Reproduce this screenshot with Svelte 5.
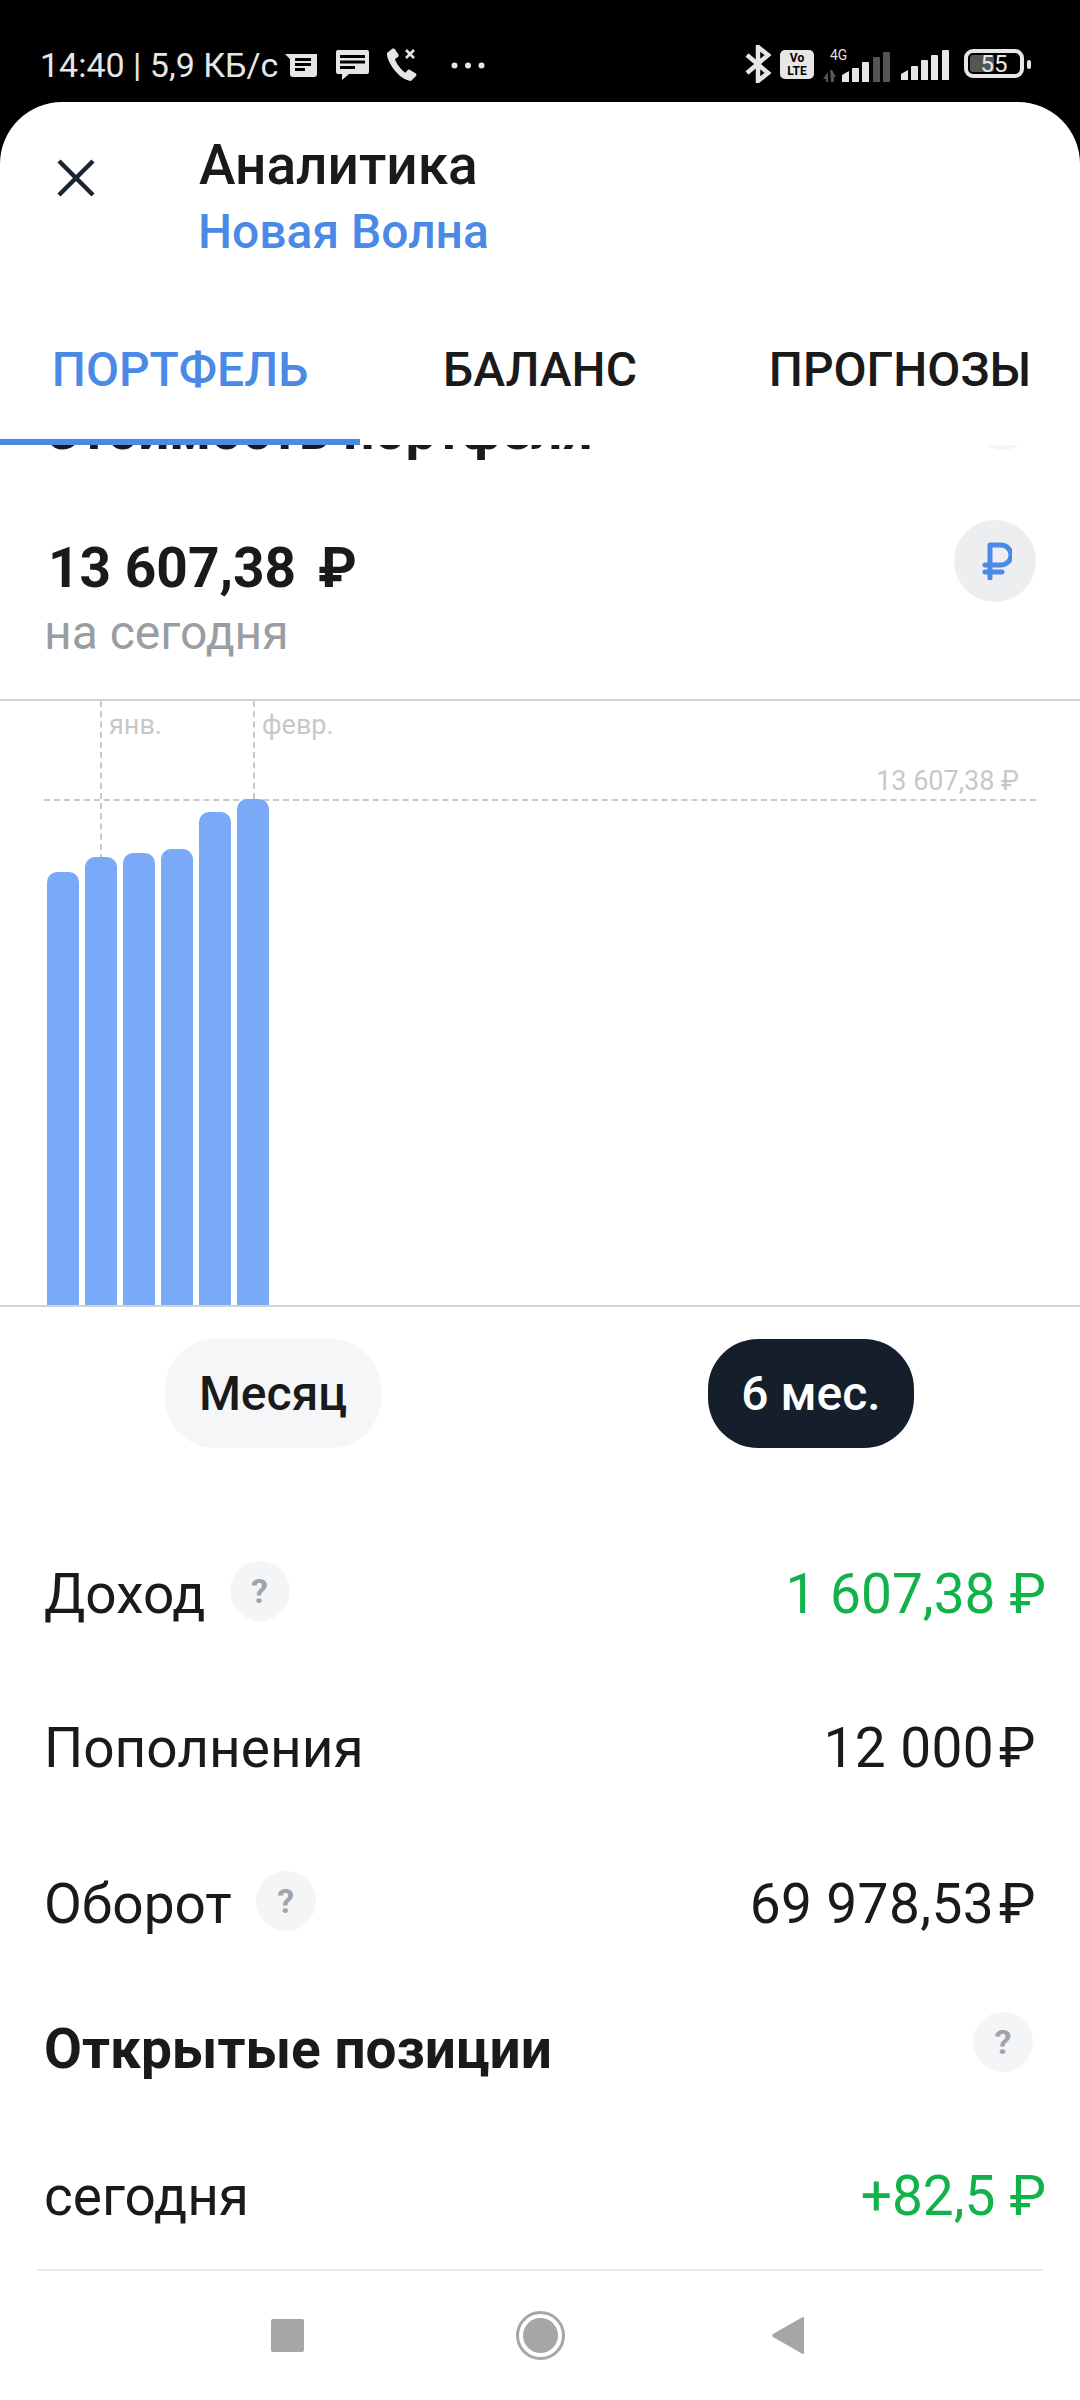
<script>
  const bars = [872, 857, 853, 849, 812, 799].map((top) => 1305 - top);
  const rows = [
    { label: 'Доход', value: '1 607,38', sign: '₽', green: true, hint: true, gap: 114 },
    { label: 'Пополнения', value: '12 000', sign: '₽', gap: 90 },
    { label: 'Оборот', value: '69 978,53', sign: '₽', hint: true, gap: 92 }
  ];
</script>

<div class="page">
  <div class="status">
    <div class="status-left">
      <span class="clock">14:40 | 5,9 КБ/с</span>
      <svg class="ic-news" viewBox="0 0 32 25" width="32" height="25">
        <path fill="#e6e6e6" d="M0 1h32v20a3 3 0 0 1-3 3H8a3 3 0 0 1-3-3V6z" />
        <path fill="#000" d="M10 5h16v3H10zM10 10h16v3H10zM10 15h10v3H10z" />
      </svg>
      <svg class="ic-msg" viewBox="0 0 33 30" width="33" height="30">
        <path fill="#e6e6e6" d="M2 0h29a2 2 0 0 1 2 2v20a2 2 0 0 1-2 2H13l-7 6v-6H2a2 2 0 0 1-2-2V2a2 2 0 0 1 2-2z" />
        <path fill="#000" d="M4 5h25v3H4zM4 10.500h25v3H4zM4 16h15v3H4z" />
      </svg>
      <svg class="ic-call" viewBox="0 0 32 33" width="32" height="33">
        <path fill="#e6e6e6" d="M6 1 1 5c-1 8 12 27 24 28l5-5c.8-1 .6-2-.2-2.600l-6-3.600c-.9-.4-1.700-.2-2.300.5l-2 2.400C15 22 10 15 9 11l3-2c.7-.6.8-1.400.5-2.200L9 1.300C8.300.4 7 .3 6 1z" />
        <path stroke="#e6e6e6" stroke-width="2.500" d="M20 2l8 8M28 2l-8 8" />
      </svg>
      <svg class="ic-dots" viewBox="0 0 34 7" width="34" height="7">
        <circle cx="3.500" cy="3.500" r="3" fill="#e6e6e6" />
        <circle cx="17" cy="3.500" r="3" fill="#e6e6e6" />
        <circle cx="30.500" cy="3.500" r="3" fill="#e6e6e6" />
      </svg>
    </div>
    <div class="status-right">
      <svg viewBox="0 0 26 38" width="26" height="38">
        <path fill="none" stroke="#e6e6e6" stroke-width="4.500" d="M2 10l21 18-10 8V2l10 8L2 28" />
      </svg>
      <div class="volte">Vo<br />LTE</div>
      <div class="net">
        <span class="four-g">4G</span>
        <svg viewBox="0 0 68 32" width="68" height="32">
          <path fill="#555" d="M0 29l5-7v10H3v-3zM7 20h2l4 7h-2v5H8z" />
          <path fill="#e6e6e6" d="M19 25l7-4v11h-7zM29 19a1 1 0 0 1 1-1h5a1 1 0 0 1 1 1v13h-7zM39 13a1 1 0 0 1 1-1h5a1 1 0 0 1 1 1v19h-7z" />
          <path fill="#555" d="M50 8a1 1 0 0 1 1-1h5a1 1 0 0 1 1 1v24h-7zM60 3a1 1 0 0 1 1-1h5a1 1 0 0 1 1 1v29h-7z" />
        </svg>
      </div>
      <svg class="sig2" viewBox="0 0 48 30" width="48" height="30">
        <path fill="#e6e6e6" d="M0 24l7-4v10H0zM10 17a1 1 0 0 1 1-1h5a1 1 0 0 1 1 1v13h-7zM20 11a1 1 0 0 1 1-1h5a1 1 0 0 1 1 1v19h-7zM30 6a1 1 0 0 1 1-1h5a1 1 0 0 1 1 1v24h-7zM41 1a1 1 0 0 1 1-1h5a1 1 0 0 1 1 1v29h-7z" />
      </svg>
      <div class="battery">
        <div class="battery-fill"></div>
        <span>55</span>
      </div>
      <div class="nub"></div>
    </div>
  </div>

  <div class="sheet">
    <header>
      <svg class="close" viewBox="0 0 38 38" width="38" height="38">
        <path stroke="#1b2430" stroke-width="4.500" d="M2 2l34 34M36 2L2 36" />
      </svg>
      <div class="titles">
        <div class="title">Аналитика</div>
        <div class="subtitle">Новая Волна</div>
      </div>
    </header>

    <nav class="tabs">
      <div class="tab active">ПОРТФЕЛЬ</div>
      <div class="tab">БАЛАНС</div>
      <div class="tab">ПРОГНОЗЫ</div>
    </nav>

    <div class="scroll">
      <div class="head first">
        <span>Стоимость портфеля</span>
        <div class="hint"></div>
      </div>

      <div class="total">
        <div>
          <div class="amount">13 607,38<span class="sign">₽</span></div>
          <div class="today">на сегодня</div>
        </div>
        <div class="cur">
          <svg viewBox="0 0 30 38" width="30" height="38">
            <path fill="none" stroke="#4a8ae6" stroke-width="5" stroke-linecap="round" stroke-linejoin="round" d="M8 36V3h11a9.500 9.500 0 0 1 0 20H3M3 30h17" />
          </svg>
        </div>
      </div>

      <div class="chart">
        <div class="vline one"></div>
        <div class="vline two"></div>
        <div class="hline"></div>
        <span class="month one">янв.</span>
        <span class="month two">февр.</span>
        <span class="max">13 607,38 ₽</span>
        <div class="bars">
          {#each bars as h}
            <div class="bar" style="height: {h}px"></div>
          {/each}
        </div>
      </div>

      <div class="periods">
        <div class="pill">Месяц</div>
        <div class="pill dark">6 мес.</div>
      </div>

      {#each rows as row}
        <div class="row" style="margin-top: {row.gap}px">
          <div class="label">
            {row.label}
            {#if row.hint}<div class="hint">?</div>{/if}
          </div>
          <div class="value" class:green={row.green}>{row.value}<span class="sign">{row.sign}</span></div>
        </div>
      {/each}

      <div class="head second">
        <span>Открытые позиции</span>
        <div class="hint">?</div>
      </div>

      <div class="row last">
        <div class="label">сегодня</div>
        <div class="value green">+82,5<span class="sign">₽</span></div>
      </div>

      <div class="divider"></div>
    </div>

    <div class="softkeys">
      <div class="square"></div>
      <div class="home"><div></div></div>
      <svg viewBox="0 0 32 37" width="32" height="37">
        <path fill="#a6a6a6" d="M32 1v35a1 1 0 0 1-1.700.7L1 20a2 2 0 0 1 0-3L30.300.3A1 1 0 0 1 32 1z" />
      </svg>
    </div>
  </div>
</div>

<style>
  :global(body) {
    margin: 0;
    background: #000;
  }

  .page {
    width: 1080px;
    height: 2400px;
    overflow: hidden;
    background: #000;
    font-family: Roboto, "Noto Sans", sans-serif;
    color: #1a1a1a;
  }

  .status {
    height: 102px;
    position: relative;
    color: #e6e6e6;
  }

  .status-left {
    display: flex;
    align-items: center;
    padding: 47px 0 0 40px;
    height: 36px;
  }

  .clock {
    font-size: 34px;
    line-height: 36px;
    width: 245px;
    white-space: nowrap;
  }

  .ic-msg {
    margin-left: 19px;
  }

  .ic-call {
    margin-left: 17px;
    margin-top: -2px;
  }

  .ic-dots {
    margin-left: 33px;
  }

  .status-right {
    position: absolute;
    top: 45px;
    left: 745px;
    display: flex;
    align-items: flex-start;
  }

  .volte {
    width: 34px;
    height: 29px;
    margin: 5px 0 0 9px;
    background: #e6e6e6;
    border-radius: 5px;
    color: #000;
    font-size: 12px;
    font-weight: 700;
    line-height: 13px;
    text-align: center;
    padding-top: 2px;
    box-sizing: border-box;
  }

  .net {
    position: relative;
    width: 68px;
    margin: 5px 0 0 9px;
    height: 32px;
  }

  .net svg {
    display: block;
  }

  .four-g {
    position: absolute;
    left: 7px;
    top: -3px;
    font-size: 14px;
    line-height: 16px;
    color: #ddd;
  }

  .sig2 {
    margin: 5px 0 0 10px;
  }

  .battery {
    position: relative;
    width: 60px;
    height: 29px;
    margin: 4px 0 0 15px;
    border: 4px solid #e6e6e6;
    border-radius: 9px;
    box-sizing: border-box;
    text-align: center;
    font-size: 24px;
    line-height: 22px;
  }

  .battery span {
    position: relative;
  }

  .battery-fill {
    position: absolute;
    left: 2px;
    top: 2px;
    bottom: 2px;
    width: 24px;
    border-radius: 3px;
    background: #555;
  }

  .nub {
    width: 4px;
    height: 9px;
    margin: 15px 0 0 3px;
    border-radius: 2px;
    background: #e6e6e6;
  }

  .sheet {
    height: 2298px;
    background: #fff;
    border-radius: 62px 62px 0 0;
    overflow: hidden;
    display: flex;
    flex-direction: column;
  }

  header {
    display: flex;
    height: 162px;
    box-sizing: border-box;
    padding: 31px 0 0 57px;
  }

  .close {
    margin: 26px 0 0 0;
  }

  .titles {
    margin-left: 104px;
  }

  .title {
    font-size: 55px;
    font-weight: 500;
    line-height: 64px;
  }

  .subtitle {
    margin-top: 3px;
    margin-left: -1px;
    font-size: 48px;
    font-weight: 500;
    line-height: 64px;
    color: #4a8ae6;
  }

  .tabs {
    display: grid;
    grid-template-columns: repeat(3, 360px);
    background: #fff;
    position: relative;
    z-index: 1;
  }

  .tab {
    height: 181px;
    box-sizing: border-box;
    padding-top: 74px;
    font-size: 48px;
    font-weight: 500;
    line-height: 64px;
    text-align: center;
  }

  .tab.active {
    color: #4a8ae6;
    border-bottom: 6px solid #4a8ae6;
  }

  .scroll {
    flex: 1;
    min-height: 0;
    overflow: hidden;
  }

  .head {
    display: flex;
    justify-content: space-between;
    align-items: flex-start;
    padding: 0 47px 0 44px;
    font-size: 55px;
    font-weight: 700;
    line-height: 60px;
  }

  .head.first {
    margin-top: -45px;
  }

  .head.second {
    margin-top: 83px;
  }

  .head.first .hint {
    margin-top: -10px;
  }

  .head.second .hint {
    margin-top: -7px;
  }

  .hint {
    width: 60px;
    height: 60px;
    border-radius: 50%;
    background: #f4f5f6;
    color: #a0a4ab;
    font-size: 34px;
    font-weight: 700;
    line-height: 60px;
    text-align: center;
    flex-shrink: 0;
  }

  .total {
    display: flex;
    justify-content: space-between;
    align-items: flex-start;
    margin-top: 76px;
    padding: 0 44px;
    height: 125px;
  }

  .amount {
    padding-left: 4px;
    font-size: 55px;
    font-weight: 700;
    line-height: 64px;
  }

  .amount .sign {
    margin-left: 22px;
  }

  .today {
    margin-top: 5px;
    font-size: 48px;
    line-height: 56px;
    color: #9a9ea3;
  }

  .cur {
    width: 82px;
    height: 82px;
    margin-top: -16px;
    border-radius: 50%;
    background: #eceef0;
    display: flex;
    align-items: center;
    justify-content: center;
  }

  .cur svg {
    margin-left: 4px;
  }

  .chart {
    position: relative;
    height: 608px;
    margin-top: 38px;
    box-sizing: border-box;
    border-top: 2px solid #d2d2d2;
    border-bottom: 2px solid #d2d2d2;
    display: flex;
    flex-direction: column;
    justify-content: flex-end;
  }

  .bars {
    display: flex;
    align-items: flex-end;
    gap: 6px;
    padding-left: 47px;
    position: relative;
  }

  .bar {
    width: 32px;
    background: #7aaaf7;
    border-radius: 10px 10px 0 0;
  }

  .vline {
    position: absolute;
    top: 0;
    width: 0;
    height: 200px;
    border-left: 2px dashed #c8c8c8;
  }

  .vline.one {
    left: 100px;
  }

  .vline.two {
    left: 253px;
    height: 98px;
  }

  .hline {
    position: absolute;
    top: 98px;
    left: 44px;
    right: 44px;
    border-top: 2px dashed #c8c8c8;
  }

  .month,
  .max {
    position: absolute;
    font-size: 27px;
    line-height: 32px;
    color: #c8c8c8;
  }

  .month {
    top: 8px;
  }

  .month.one {
    left: 109px;
  }

  .month.two {
    left: 262px;
  }

  .max {
    top: 64px;
    right: 61px;
  }

  .periods {
    display: grid;
    grid-template-columns: 1fr 1fr;
    justify-items: center;
    padding: 32px 0 0 4px;
  }

  .pill {
    height: 109px;
    padding: 0 34px;
    border-radius: 50px;
    background: #f4f6f8;
    font-size: 48px;
    font-weight: 500;
    line-height: 109px;
  }

  .pill.dark {
    padding: 0 33px;
    background: #151f2c;
    color: #fff;
  }

  .row {
    display: flex;
    justify-content: space-between;
    align-items: center;
    height: 64px;
    padding: 0 34px 0 44px;
    font-size: 55px;
    line-height: 64px;
  }

  .row.last {
    margin-top: 85px;
  }

  .label {
    display: flex;
    align-items: center;
    gap: 24px;
  }

  .label .hint {
    margin-top: -6px;
  }

  .value {
    padding-right: 10px;
    letter-spacing: 0.4px;
  }

  .value .sign {
    margin-left: 5px;
  }

  .value.green {
    padding-right: 0;
    letter-spacing: 0;
    color: #12b24a;
  }

  .value.green .sign {
    margin-left: 14px;
  }

  .divider {
    height: 2px;
    margin: 41px 37px 0;
    background: #e8e8e8;
  }

  .softkeys {
    position: absolute;
    top: 2271px;
    left: 0;
    width: 1080px;
    height: 129px;
    display: flex;
    align-items: center;
    gap: 0;
  }

  .square {
    width: 33px;
    height: 33px;
    margin-left: 271px;
    border-radius: 2px;
    background: #a6a6a6;
  }

  .home {
    width: 49px;
    height: 49px;
    margin-left: 212px;
    box-sizing: border-box;
    border: 3px solid #a6a6a6;
    border-radius: 50%;
    padding: 4px;
    margin-right: 207px;
  }

  .home div {
    width: 100%;
    height: 100%;
    border-radius: 50%;
    background: #a6a6a6;
  }
</style>
